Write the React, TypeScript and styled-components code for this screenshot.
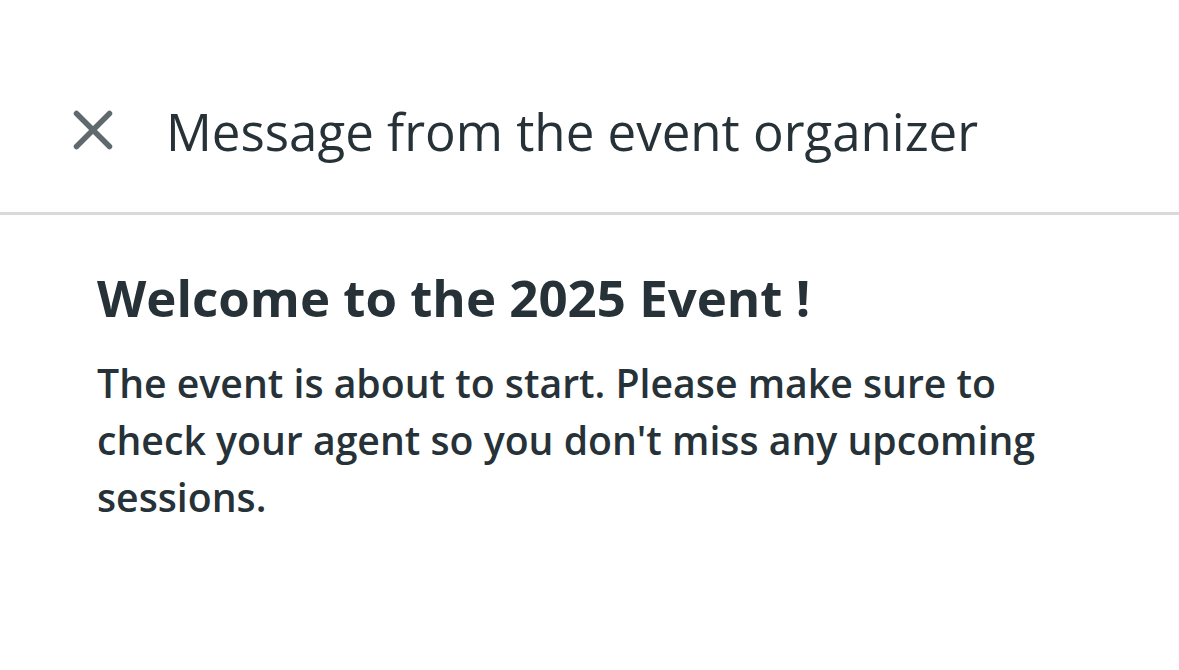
import React from 'react'
import styled, { createGlobalStyle } from 'styled-components'

const GlobalStyle = createGlobalStyle`
  body {
    margin: 0;
    background: #ffffff;
    font-family: "Open Sans", "Liberation Sans", sans-serif;
  }
`

const Page = styled.div`
  width: 1179px;
  height: 670px;
  background: #ffffff;
  color: #263238;
`

const Header = styled.header`
  display: flex;
  align-items: center;
  height: 215px;
  padding: 50px 0 0 72px;
  box-sizing: border-box;
  border-bottom: 3px solid #d9d9d9;
`

const CloseButton = styled.button`
  display: flex;
  align-items: center;
  justify-content: center;
  width: 42px;
  height: 42px;
  padding: 0;
  margin: 0 52px 0 0;
  border: none;
  background: none;
  cursor: pointer;
`

const Title = styled.h1`
  margin: 0;
  font-size: 51px;
  font-weight: 400;
  letter-spacing: 0;
`

const Body = styled.main`
  padding: 52px 97px;
`

const Heading = styled.h2`
  margin: 0 0 26px;
  font-size: 51px;
  font-weight: 700;
  line-height: 1.2;
`

const Text = styled.p`
  margin: 0;
  font-size: 39.2px;
  font-weight: 600;
  line-height: 57px;
  max-width: 980px;
`

const CloseIcon = () => (
  <svg width="42" height="42" viewBox="0 0 42 42" fill="none">
    <path
      d="M4.5 3.5 L37.5 36.5 M37.5 3.5 L4.5 36.5"
      stroke="#5f6a6e"
      strokeWidth="5.5"
      strokeLinecap="round"
    />
  </svg>
)

const App: React.FC = () => (
  <Page>
    <GlobalStyle />
    <Header>
      <CloseButton aria-label="Close">
        <CloseIcon />
      </CloseButton>
      <Title>Message from the event organizer</Title>
    </Header>
    <Body>
      <Heading>Welcome to the 2025 Event !</Heading>
      <Text>
        The event is about to start. Please make sure to check your agent so
        you don't miss any upcoming sessions.
      </Text>
    </Body>
  </Page>
)

export default App
